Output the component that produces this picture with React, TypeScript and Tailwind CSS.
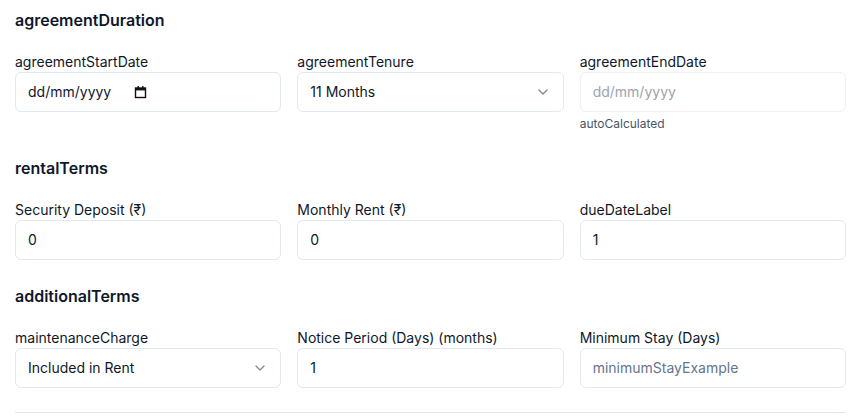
import { ChevronDown } from 'lucide-react';

const inputBase =
  'flex h-10 w-full items-center rounded-md border border-[#e2e8f0] bg-white px-3 text-sm text-[#0f172a]';

function Field({ label, children, hint }: { label: string; children: React.ReactNode; hint?: string }) {
  return (
    <div>
      <label className="block text-sm leading-5 font-normal text-[#0f172a]">{label}</label>
      {children}
      {hint && <p className="mt-1 text-xs leading-4 text-[#475569]">{hint}</p>}
    </div>
  );
}

function CalendarIcon() {
  return (
    <svg width="13" height="14" viewBox="0 0 13 14" className="ml-[23px]">
      <rect x="1.5" y="3" width="10" height="9.5" fill="none" stroke="#111" strokeWidth="1.4" />
      <rect x="1.5" y="3" width="10" height="2.4" fill="#111" />
      <rect x="3.5" y="1" width="1.4" height="2.5" fill="#111" />
      <rect x="8.1" y="1" width="1.4" height="2.5" fill="#111" />
    </svg>
  );
}

function SelectBox({ value }: { value: string }) {
  return (
    <div className={`${inputBase} justify-between`}>
      <span>{value}</span>
      <ChevronDown className="h-4 w-4 text-[#0f172a] opacity-50" />
    </div>
  );
}

export default function App() {
  return (
    <div className="min-h-screen bg-white px-[15px] pt-2 font-['Inter',sans-serif] text-[#0f172a]">
      <section>
        <h3 className="mb-5 text-base leading-6 font-semibold">agreementDuration</h3>
        <div className="grid grid-cols-3 gap-4">
          <Field label="agreementStartDate">
            <div className={inputBase}>
              <span>dd/mm/yyyy</span>
              <CalendarIcon />
            </div>
          </Field>
          <Field label="agreementTenure">
            <SelectBox value="11 Months" />
          </Field>
          <Field label="agreementEndDate" hint="autoCalculated">
            <div className={`${inputBase} border-[#edf0f4] bg-[#f6f7f9] text-[#9ca3af]`}>dd/mm/yyyy</div>
          </Field>
        </div>
      </section>

      <section className="mt-6">
        <h3 className="mb-5 text-base leading-6 font-semibold">rentalTerms</h3>
        <div className="grid grid-cols-3 gap-4">
          <Field label="Security Deposit (₹)">
            <div className={inputBase}>0</div>
          </Field>
          <Field label="Monthly Rent (₹)">
            <div className={inputBase}>0</div>
          </Field>
          <Field label="dueDateLabel">
            <div className={inputBase}>1</div>
          </Field>
        </div>
      </section>

      <section className="mt-6">
        <h3 className="mb-5 text-base leading-6 font-semibold">additionalTerms</h3>
        <div className="grid grid-cols-3 gap-4">
          <Field label="maintenanceCharge">
            <SelectBox value="Included in Rent" />
          </Field>
          <Field label="Notice Period (Days) (months)">
            <div className={inputBase}>1</div>
          </Field>
          <Field label="Minimum Stay (Days)">
            <div className={`${inputBase} text-[#64748b]`}>minimumStayExample</div>
          </Field>
        </div>
      </section>

      <div className="mt-6 border-t border-[#e2e8f0]" />
    </div>
  );
}
